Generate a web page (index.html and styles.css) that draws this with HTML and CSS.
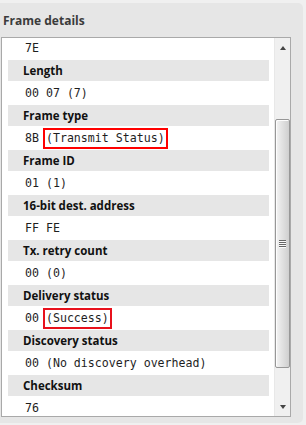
FILE: index.html
```html
<!DOCTYPE html>
<html lang="en">
<head>
  <meta charset="UTF-8">
  <meta name="viewport" content="width=device-width, initial-scale=1.0">
  <title>Frame details</title>
  <link rel="stylesheet" href="styles.css">
</head>
<body>
  <div id="panel">
    <div class="title">Frame details</div>
    <div class="listbox">
      <div class="list">
        <div class="rows">
          <div class="value">7E</div>
          <div class="label">Length</div>
          <div class="value">00 07 (7)</div>
          <div class="label">Frame type</div>
          <div class="value">8B <span class="mark">(Transmit Status)</span></div>
          <div class="label">Frame ID</div>
          <div class="value">01 (1)</div>
          <div class="label">16-bit dest. address</div>
          <div class="value">FF FE</div>
          <div class="label">Tx. retry count</div>
          <div class="value">00 (0)</div>
          <div class="label">Delivery status</div>
          <div class="value">00 <span class="mark alt">(Success)</span></div>
          <div class="label">Discovery status</div>
          <div class="value">00 (No discovery overhead)</div>
          <div class="label">Checksum</div>
          <div class="value">76</div>
        </div>
      </div>
      <div class="scrollbar">
        <div class="sb-btn"><div class="arrow up"></div></div>
        <div class="sb-track">
          <div class="thumb">
            <div class="grip"><div></div><div></div><div></div><div></div></div>
          </div>
        </div>
        <div class="sb-btn"><div class="arrow down"></div></div>
      </div>
    </div>
  </div>
</body>
</html>
```

FILE: styles.css
```css
*{
  margin: 0px;
  padding: 0px;
  box-sizing: border-box;
}
body{
  background-color: #f0f0f0;
  width: 306px;
  height: 425px;
  overflow: hidden;
}
#panel{
  margin-top: 3px;
  width: 303px;
  height: 420px;
  background-color: #e6e6e6;
  border-radius: 0 5px 5px 0;
  padding: 10px 0 0 1px;
}
.title{
  font-family: "Open Sans", sans-serif;
  font-weight: bold;
  font-size: 12px;
  line-height: 16px;
  color: #3b3b3b;
  padding-left: 2px;
  margin-bottom: 8px;
}
.listbox{
  width: 290px;
  height: 380px;
  border: 1px solid #a9a9a9;
  background-color: #fff;
  display: flex;
}
.list{
  width: 272px;
  height: 100%;
  overflow: hidden;
}
.rows{
  margin-top: -2px;
}
.label{
  margin: 0 5px 0 6px;
  height: 21px;
  background-color: #e6e6e6;
  padding-left: 15px;
  font-family: "Open Sans", sans-serif;
  font-weight: bold;
  font-size: 11.5px;
  line-height: 21px;
  color: #111;
}
.value{
  margin: 0 5px 0 6px;
  height: 24px;
  padding-left: 17px;
  font-family: "DejaVu Sans Mono", monospace;
  font-size: 11.6px;
  line-height: 24px;
  color: #1e1e1e;
  white-space: pre;
}
.mark{
  display: inline-block;
  border: 2px solid #ff0000;
  padding: 0 1px;
  margin: 0 -3px;
  line-height: 17px;
  vertical-align: middle;
}
.mark.alt{
  border-color: #e8111c;
}
.scrollbar{
  width: 16px;
  height: 100%;
  background-color: #f0f0f0;
  border-left: 1px solid #e8e8e8;
  display: flex;
  flex-direction: column;
}
.sb-btn{
  height: 17px;
  display: flex;
  align-items: center;
  justify-content: center;
}
.arrow{
  width: 0;
  height: 0;
  border-left: 3.5px solid transparent;
  border-right: 3.5px solid transparent;
}
.arrow.up{
  border-bottom: 4px solid #444;
  margin-top: 2px;
}
.arrow.down{
  border-top: 4px solid #444;
  margin-top: -2px;
}
.sb-track{
  flex: 1;
  padding-top: 64px;
}
.thumb{
  width: 15px;
  height: 249px;
  border: 1px solid #979797;
  border-radius: 2px;
  background: linear-gradient(to right, #f4f4f4, #e4e4e4 40%, #cfcfcf);
  box-shadow: inset 1px 1px 0 #fdfdfd;
  display: flex;
  align-items: center;
  justify-content: center;
}
.grip{
  width: 7px;
  display: flex;
  flex-direction: column;
  gap: 1px;
}
.grip>div{
  height: 1px;
  background-color: #666;
  box-shadow: 0 1px 0 #fafafa;
}
```
